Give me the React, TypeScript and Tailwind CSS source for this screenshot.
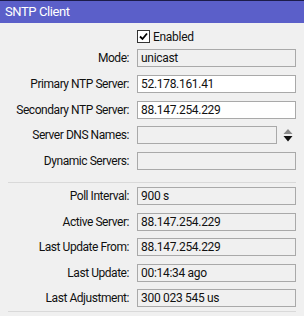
import React from "react";

const font = { fontFamily: 'Roboto, "Liberation Sans", sans-serif' };

const Field = ({ label, value, white, mt, spinner }) => (
    <div className={`flex items-center ${mt}`}>
        <div className="w-[130px] text-right text-[12px] text-[#111] leading-none tracking-[-0.45px] pr-[1px]">{label}</div>
        <div className="ml-[7px] flex items-center">
            <div
                className={`h-[18px] ${spinner ? "w-[140px]" : "w-[159px]"} border border-[#a9a9a9] ${white ? "bg-white" : "bg-[#f0f0f0]"} flex items-center px-[3px] text-[12px] text-[#111] leading-none tracking-[-0.3px]`}
            >
                {value}
            </div>
            {spinner && (
                <svg width="10" height="13" viewBox="0 0 10 13" className="ml-[6px]">
                    <polygon points="5,0 9.5,5 0.5,5" fill="#8a8a8a" />
                    <polygon points="0.5,7 9.5,7 5,12.5" fill="#111" />
                </svg>
            )}
        </div>
    </div>
);

const App = () => {
    return (
        <div className="w-[304px] h-[316px] bg-[#f0f0f0] overflow-hidden" style={font}>
            <div className="h-[23px] bg-[#5b5fc9] border-t border-[#1c1c4a] flex items-center pl-[5px] text-white text-[13px] tracking-[-0.4px]">
                SNTP Client
            </div>

            <div className="flex items-center mt-[7px] ml-[137px]">
                <div className="w-[13px] h-[13px] bg-white border border-[#333] flex items-center justify-center">
                    <svg width="9" height="9" viewBox="0 0 9 9">
                        <path d="M1 4.5 L3.5 7 L8 1.5" stroke="#000" strokeWidth="1.8" fill="none" />
                    </svg>
                </div>
                <span className="ml-[3px] text-[12px] text-[#111] leading-none tracking-[-0.3px]">Enabled</span>
            </div>

            <Field label="Mode:" value="unicast" mt="mt-[6px]" />
            <Field label="Primary NTP Server:" value="52.178.161.41" white mt="mt-[8px]" />
            <Field label="Secondary NTP Server:" value="88.147.254.229" white mt="mt-[8px]" />
            <Field label="Server DNS Names:" value="" mt="mt-[7px]" spinner />
            <Field label="Dynamic Servers:" value="" mt="mt-[8px]" />

            <div className="mt-[12px] ml-[8px] mr-[8px] h-px bg-[#d9d9d9]" />

            <Field label="Poll Interval:" value="900 s" mt="mt-[4px]" />
            <Field label="Active Server:" value="88.147.254.229" mt="mt-[8px]" />
            <Field label="Last Update From:" value="88.147.254.229" mt="mt-[7px]" />
            <Field label="Last Update:" value="00:14:34 ago" mt="mt-[8px]" />
            <Field label="Last Adjustment:" value="300 023 545 us" mt="mt-[7px]" />

            <div className="mt-[4px] ml-[8px] mr-[8px] h-px bg-[#d9d9d9]" />
        </div>
    );
};

export default App;
